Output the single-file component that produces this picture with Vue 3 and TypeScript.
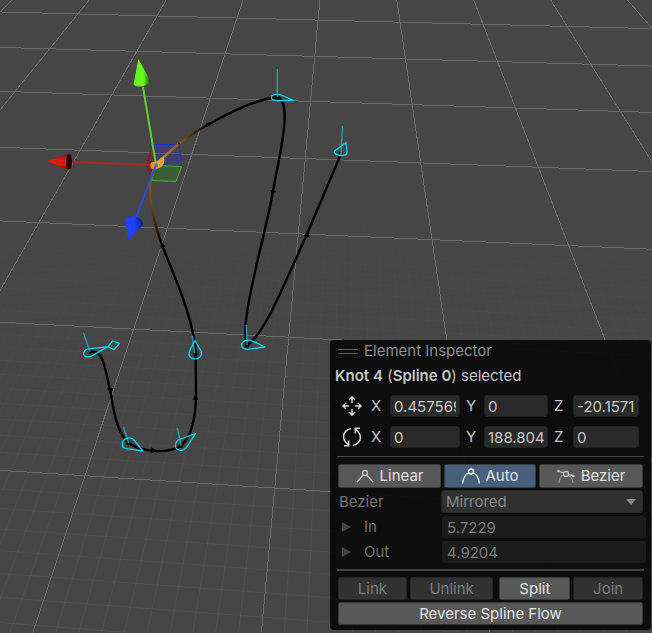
<script setup lang="ts">
import { ref } from 'vue'

interface Line { x1: number; y1: number; x2: number; y2: number }
interface Axis { id: string; axis: string; value: string }

const W = 652
const H = 633

// Depth lines all meet in one vanishing point above the view.
function depthLine(k: number): Line {
  const vx = 349.6
  const vy = -321
  const x0 = 12.3 + 76.9 * k
  return { x1: x0, y1: 0, x2: x0 + ((x0 - vx) / -vy) * H, y2: H }
}

// Cross lines spread out with perspective as they come closer.
function crossLine(k: number): Line {
  const d = 10.325 - k
  return { x1: 0, y1: -318.4 + 3411 / d, x2: W, y2: -320.2 + 3601.5 / d }
}

const major: Line[] = []
const minor: Line[] = []
for (let i = -40; i <= 100; i++) {
  (i % 10 === 0 ? major : minor).push(depthLine(i / 10))
}
for (let i = -10; i <= 69; i++) {
  (i % 10 === 0 ? major : minor).push(crossLine(i / 10))
}

const position = ref<Axis[]>([
  { id: 'px', axis: 'X', value: '0.457569' },
  { id: 'py', axis: 'Y', value: '0' },
  { id: 'pz', axis: 'Z', value: '-20.1571' },
])
const rotation = ref<Axis[]>([
  { id: 'rx', axis: 'X', value: '0' },
  { id: 'ry', axis: 'Y', value: '188.804' },
  { id: 'rz', axis: 'Z', value: '0' },
])
const mode = ref<'Linear' | 'Auto' | 'Bezier'>('Auto')
</script>

<template>
  <main class="viewport">
    <svg class="scene" viewBox="0 0 652 633" preserveAspectRatio="xMinYMin slice" aria-hidden="true">
      <defs>
        <linearGradient id="fade" gradientUnits="userSpaceOnUse" x1="0" y1="150" x2="0" y2="633">
          <stop offset="0" stop-color="#000" />
          <stop offset="0.35" stop-color="#555" />
          <stop offset="1" stop-color="#fff" />
        </linearGradient>
        <mask id="near" maskUnits="userSpaceOnUse" x="0" y="0" width="652" height="633">
          <rect width="652" height="633" fill="url(#fade)" />
        </mask>
        <linearGradient id="below" gradientUnits="userSpaceOnUse" x1="0" y1="163" x2="0" y2="246">
          <stop offset="0" stop-color="#a06a1a" />
          <stop offset="0.5" stop-color="#6a4812" />
          <stop offset="1" stop-color="#000" />
        </linearGradient>
        <linearGradient id="above" gradientUnits="userSpaceOnUse" x1="157" y1="163" x2="209" y2="124">
          <stop offset="0" stop-color="#c98a3a" />
          <stop offset="0.45" stop-color="#8a5c1a" />
          <stop offset="1" stop-color="#000" />
        </linearGradient>
        <linearGradient id="green" x1="0" x2="1">
          <stop offset="0" stop-color="#5cf01c" />
          <stop offset="0.55" stop-color="#66ff1c" />
          <stop offset="0.8" stop-color="#3a9a10" />
          <stop offset="1" stop-color="#123804" />
        </linearGradient>
        <linearGradient id="blue" x1="0" x2="1">
          <stop offset="0" stop-color="#1a40ff" />
          <stop offset="0.5" stop-color="#1c44ff" />
          <stop offset="1" stop-color="#0c2080" />
        </linearGradient>
        <linearGradient id="red" x1="0" y1="0" x2="0" y2="1">
          <stop offset="0" stop-color="#7a0c08" />
          <stop offset="0.35" stop-color="#e0180e" />
          <stop offset="0.7" stop-color="#e8180e" />
          <stop offset="1" stop-color="#600804" />
        </linearGradient>
      </defs>

      <g class="minor" mask="url(#near)">
        <line v-for="(l, i) in minor" :key="i" v-bind="l" />
      </g>
      <g class="major">
        <line v-for="(l, i) in major" :key="i" v-bind="l" />
      </g>

      <g class="plane">
        <path d="M153 144.500H179L181.500 165.500H156Z" fill="#3038a8" fill-opacity=".38" stroke="#1c30c8" />
        <path d="M155.500 165.500L181.500 166.500L176 181.500L151.500 180.500Z" fill="#2f7a22" fill-opacity=".45" stroke="#4cb824" />
        <path d="M153 144.500L148.500 157L148 168L151.500 180.500L156 165.500Z" fill="#7a1c14" fill-opacity=".3" />
        <path d="M153 144.500L148.500 157L148 168L151.500 180.500" stroke="#861812" />
      </g>

      <g class="spline">
        <path d="M90 352C103 348 105 368 110.300 391C114 413 117 432 128.500 443.300C141 451 165 455 181 446C192 436 196 418 196 393L195.700 353C194 326 184 298 162.300 246" />
        <path d="M162.300 246C156 228 150 206 150 190C150 181 152 172 156.500 164" />
        <path d="M157 163L179 143.500C188 137 198 130 209 124" />
        <path d="M207 125.300C232 111 257 98.500 277 97.500C285 99 285 112 284.500 122C283 145 277 168 273 191C266 232 246 298 245.300 331L246.500 345.500C262 336 276 304 307 234L341 154" />
      </g>
      <g class="marks">
        <path d="M107 388L113.500 388L110.800 394.500Z" />
        <path d="M151 447.500L151 453.500L157 450.500Z" />
        <path d="M192.500 400L198.500 400L195.700 394Z" />
        <path d="M160.300 248.500L165.500 246.500L161.500 242.500Z" />
        <path d="M206 123.500L209.500 127L212 121.500Z" />
        <path d="M270 190L276 191L272.300 195Z" />
        <path d="M303.500 236L309.500 237.500L308.500 231Z" />
        <circle cx="91" cy="352" r="1.800" /><circle cx="128.500" cy="443" r="2.200" />
        <circle cx="181" cy="446" r="2.200" /><circle cx="195.500" cy="354" r="2.200" />
        <circle cx="277" cy="97.500" r="2.700" /><circle cx="247" cy="345.500" r="2.300" />
        <circle cx="340.700" cy="153.500" r="1.800" /><circle cx="179" cy="143.500" r="1" />
      </g>
      <g class="stems">
        <path d="M277.300 69V97M83.500 333L90 351.500M123.500 427L128.500 443M177.500 428L181 445.500M192.300 335.500L194.700 353M246.300 325L247.200 345M342.500 126L341 155" />
      </g>
      <g class="knots">
        <path d="M293.800 100.500L281 95C275 93.500 271.300 95 271.300 97.500C271.500 99.500 274 100.500 277 100.500Z" />
        <path d="M108 346.700L90 348.600C83 349 81 356.800 88 357C93 357 95 353 108 346.700L112.700 341L119.500 343.500L114 349.700Z" />
        <path d="M142.800 451L134.500 440.500C130.500 435.500 122 438.500 122.500 444.500C122 448.500 126 448.700 130 449.200Z" />
        <path d="M195.500 433.700L180.500 439C174 441 173.500 450 180 450.300C186 451 187.500 445.500 195.500 433.700Z" />
        <path d="M195 340.500L189.500 351C185.500 361.500 204.500 361.500 201 351Z" />
        <path d="M265 347L252 340.800C241 337.500 237 349.300 248 349.300Z" />
        <path d="M346 142.500L335 150.700C332.500 153.500 338 155.500 341 155.500C349 155.700 347 153 346 142.500Z" />
      </g>

      <path d="M156 165L72 162" stroke="#a92a22" stroke-width="2" />
      <path d="M163.500 156.500C165.500 160 164 167 158 168.500C154 169.500 151.500 168 152.500 165Z" fill="#e2a040" />
      <circle cx="154" cy="165.500" r="3.700" fill="#ee8c28" />
      <path d="M156 165L143 87" stroke="#5dd22c" stroke-width="2" />
      <path d="M156 165L136 217.500" stroke="#2c4ce0" stroke-width="2" />
      <circle cx="156.500" cy="165.500" r="1.500" fill="#3a6cff" />
      <path d="M138.300 59L133.500 84.500C136 87.500 146 87.500 151 81.500Z" fill="url(#green)" />
      <path d="M47 161L68 154C71 155 71 168 68 169.500Z" fill="url(#red)" />
      <ellipse cx="69" cy="161.800" rx="3" ry="7.700" fill="#260806" />
      <path d="M125 219C129 214.500 142 215 143 224.500L128.300 239.500Z" fill="url(#blue)" />
    </svg>

    <form class="panel" @submit.prevent>
      <header class="title">
        <span class="grip"></span>
        <h1>Element Inspector</h1>
      </header>
      <p class="selection"><b>Knot 4</b> (<b>Spline 0</b>) selected</p>

      <div class="vector">
        <svg class="icon" viewBox="0 0 20 20" role="img" aria-label="Position">
          <path d="M10 7V1.500M7 4L10 1L13 4M10 13V18.500M7 16L10 19L13 16M7 10H1.500M4 7L1 10L4 13M13 10H18.500M16 7L19 10L16 13" />
        </svg>
        <template v-for="f in position" :key="f.id">
          <label :for="f.id">{{ f.axis }}</label>
          <input :id="f.id" v-model="f.value" type="text">
        </template>
      </div>
      <div class="vector">
        <svg class="icon" viewBox="0 0 20 20" role="img" aria-label="Rotation">
          <path d="M9 1.500C0 4 -.5 12 6 17.500M2 18.700H6.700V13.500M11 18.500C20 16 20.500 8 14 2.500M18 1.300H13.300V6.500" />
        </svg>
        <template v-for="f in rotation" :key="f.id">
          <label :for="f.id">{{ f.axis }}</label>
          <input :id="f.id" v-model="f.value" type="text">
        </template>
      </div>

      <hr>

      <div class="modes">
        <button type="button" :class="{ on: mode === 'Linear' }" @click="mode = 'Linear'">
          <svg viewBox="0 0 18 16" aria-hidden="true"><path d="M1 14L7.300 7M17 14L10.700 7" /><circle cx="9" cy="5" r="2.500" /></svg>
          Linear
        </button>
        <button type="button" :class="{ on: mode === 'Auto' }" @click="mode = 'Auto'">
          <svg viewBox="0 0 18 16" aria-hidden="true"><path d="M.7 15.500C1 10 4 6 7 4.500M17.300 15.500C17 10 14 6 11 4.500" /><circle cx="9" cy="3.500" r="2.500" /></svg>
          Auto
        </button>
        <button type="button" :class="{ on: mode === 'Bezier' }" @click="mode = 'Bezier'">
          <svg viewBox="0 0 18 16" aria-hidden="true"><path class="soft" d="M2 15C2 10 4 8 7 6.500M16 15C16 11 14.500 9 11 7" /><path d="M1 3L7 5M11.500 6.500L17 8" /><circle cx="9" cy="6" r="2.500" /><circle cx="1.500" cy="3" r=".6" /><circle cx="16.500" cy="8" r=".6" /></svg>
          Bezier
        </button>
      </div>

      <div class="row">
        <label for="tangent">Bezier</label>
        <div class="drop">
          <select id="tangent" disabled><option>Mirrored</option></select>
          <svg viewBox="0 0 10 6" aria-hidden="true"><path d="M0 0H10L5 6Z" /></svg>
        </div>
      </div>
      <div class="row fold">
        <button type="button" class="twisty" aria-label="Expand In" disabled><svg viewBox="0 0 10 10"><path d="M0 0L9 5L0 10Z" /></svg></button>
        <label for="in">In</label>
        <input id="in" type="text" value="5.7229" disabled>
      </div>
      <div class="row fold">
        <button type="button" class="twisty" aria-label="Expand Out" disabled><svg viewBox="0 0 10 10"><path d="M0 0L9 5L0 10Z" /></svg></button>
        <label for="out">Out</label>
        <input id="out" type="text" value="4.9204" disabled>
      </div>

      <hr class="thick">

      <div class="actions">
        <button type="button" disabled>Link</button>
        <button type="button" disabled>Unlink</button>
        <button type="button" class="split">Split</button>
        <button type="button" disabled>Join</button>
      </div>
      <button type="button" class="reverse">Reverse Spline Flow</button>
    </form>
  </main>
</template>

<style>
body {
  margin: 0;
  background: #464646;
}
</style>

<style scoped>
.viewport {
  position: relative;
  display: flex;
  align-items: flex-end;
  justify-content: flex-end;
  min-height: 100vh;
  box-sizing: border-box;
  padding: 0 1px 3px 0;
  overflow: hidden;
  background: #464646;
  font: 15px/20px Inter, sans-serif;
  color: #c6c6c6;
}
.scene {
  position: absolute;
  inset: 0;
  width: 100%;
  height: 100%;
  fill: none;
}
.major line {
  stroke: #6b6b6b;
  shape-rendering: crispEdges;
}
.minor line {
  stroke: #fff;
  stroke-opacity: 0.055;
}
.spline path {
  stroke: #000;
  stroke-width: 2.4px;
  stroke-linejoin: round;
}
.spline path:nth-child(2) {
  stroke: url(#below);
}
.spline path:nth-child(3) {
  stroke: url(#above);
}
.marks {
  fill: #000;
}
.stems path {
  stroke: #20a0b4;
  stroke-width: 1.4px;
}
.knots path {
  stroke: #06d8fa;
  stroke-width: 1.3px;
  stroke-linejoin: round;
}

.panel {
  position: relative;
  box-sizing: border-box;
  width: 321px;
  max-width: 100%;
  padding: 0 8px 5px;
  border-radius: 4px;
  background: rgb(11 11 11 / 95%);
}
.title {
  display: flex;
  align-items: center;
  gap: 6px;
  height: 22px;
}
.title h1 {
  margin: 0;
  font-size: 15px;
  font-weight: 400;
  color: #8e8e8e;
}
.grip {
  width: 20px;
  height: 3px;
  border: solid #606060;
  border-width: 1px 0;
}
.selection {
  margin: 4px 0 9px -3px;
}
.selection b {
  font-weight: 600;
}
input,
select {
  box-sizing: border-box;
  width: 100%;
  min-width: 0;
  height: 22px;
  margin: 0;
  padding: 0 3px;
  border: 1px solid #222;
  border-radius: 3px;
  background: #2a2a2a;
  color: #c8c8c8;
  font: inherit;
}
.vector {
  display: grid;
  grid-template-columns: 24px 13px 70fr 12px 64fr 13px 66fr;
  column-gap: 6px;
  align-items: center;
  margin: 0 4px 9px 3px;
}
.vector .icon {
  width: 20px;
  height: 20px;
  margin-left: 1px;
  fill: none;
  stroke: #d8d8d8;
  stroke-width: 1.5px;
}
hr {
  height: 1px;
  margin: -1px -1px 7px;
  border: 0;
  background: #444;
}
hr.thick {
  height: 2px;
  margin: 6px -1px;
}
button {
  box-sizing: border-box;
  height: 23px;
  padding: 0;
  border: 1px solid #383838;
  border-radius: 2px;
  background: #585858;
  color: #e2e2e2;
  font: inherit;
}
.modes {
  display: grid;
  grid-template-columns: 103fr 92fr 104fr;
  gap: 3px;
}
.modes button {
  display: flex;
  align-items: center;
  justify-content: center;
  gap: 6px;
  height: 24px;
}
.modes button.on {
  background: #46607c;
}
.modes svg {
  width: 18px;
  height: 16px;
  fill: none;
  stroke: #c4c4c4;
  stroke-width: 1.3px;
}
.modes .on svg {
  stroke: #fff;
}
.modes .soft {
  stroke: #909090;
}
.row {
  display: grid;
  grid-template-columns: 103px 1fr;
  align-items: center;
  margin-top: 2px;
  color: #737373;
}
.row label {
  padding-left: 1px;
}
.row.fold {
  grid-template-columns: 25px 79px 1fr;
  margin: 3px -3px 0 0;
}
.row input {
  padding: 0 4px;
  border-color: #1a1a1a;
  background: #1c1c1c;
  color: #7a7a7a;
}
.drop {
  display: grid;
  align-items: center;
}
.drop > * {
  grid-area: 1 / 1;
}
.drop select {
  height: 23px;
  padding: 0 4px;
  appearance: none;
  border-color: #262626;
  background: #303030;
  color: #888;
  opacity: 1;
}
.drop svg {
  justify-self: end;
  width: 10px;
  height: 6px;
  margin-right: 7px;
  fill: #888;
  pointer-events: none;
}
.twisty {
  height: 20px;
  padding-left: 4px;
  border: 0;
  background: none;
}
.twisty svg {
  display: block;
  width: 10px;
  height: 10px;
  fill: #444;
}
.actions {
  display: grid;
  grid-template-columns: 69fr 84fr 74fr 70fr;
  gap: 3px;
  margin-bottom: 2px;
}
.actions button:disabled {
  border-color: #242424;
  background: #323232;
  color: #7c7c7c;
}
.actions .split {
  margin-left: 3px;
}
.reverse {
  display: block;
  width: 100%;
}
</style>
